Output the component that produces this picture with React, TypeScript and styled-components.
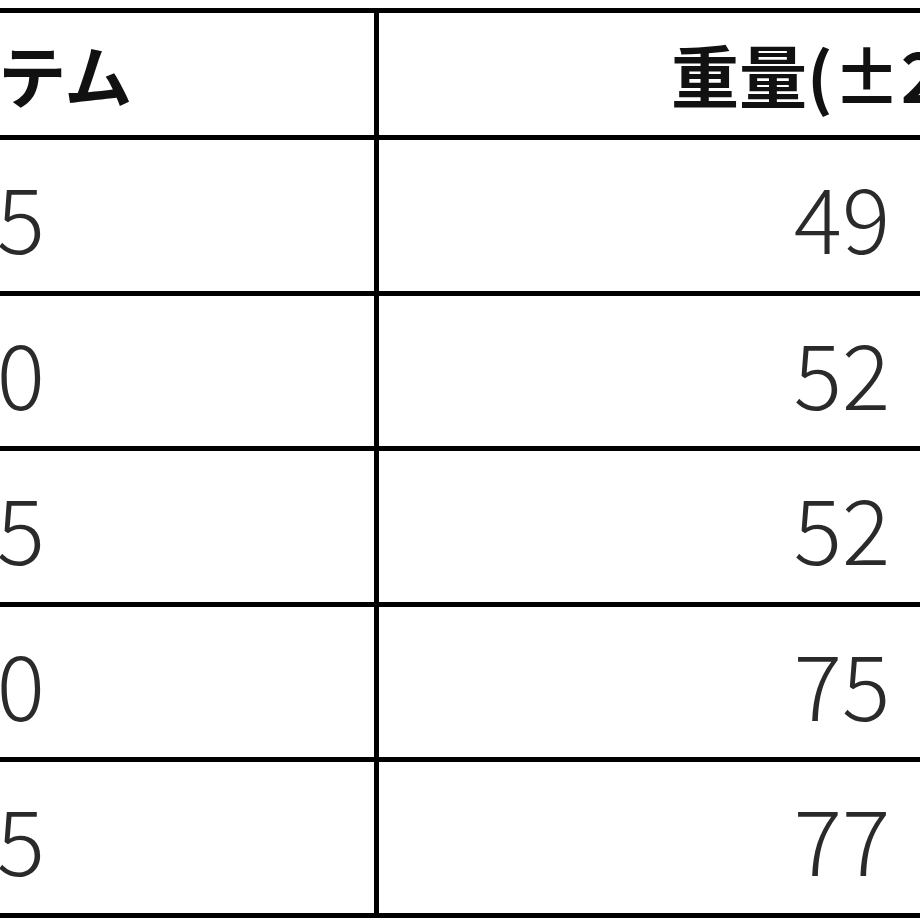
import React from "react";
import styled, { createGlobalStyle } from "styled-components";

const Global = createGlobalStyle`
  html, body { margin: 0; padding: 0; background: #fff; }
  body { font-family: "Noto Sans CJK JP", "Noto Sans", sans-serif; }
`;

const Viewport = styled.div`
  width: 920px;
  height: 920px;
  overflow: hidden;
  background: #fff;
`;

const Table = styled.table`
  width: 1474.5px;
  min-width: 1474.5px;
  margin-top: 8px;
  margin-left: -170px;
  border-spacing: 0;
  border-collapse: separate;
  border-top: 5px solid #000;
  border-left: 5px solid #000;
  table-layout: fixed;
`;

const Col = styled.col<{ $width: number }>`
  width: ${(p) => p.$width}px;
`;

const HeadCell = styled.th<{ $align: "left" | "center" }>`
  box-sizing: border-box;
  height: 127px;
  padding: 0 0 0 ${(p) => (p.$align === "left" ? 32 : 0)}px;
  border-right: 5px solid #000;
  border-bottom: 5px solid #000;
  text-align: ${(p) => p.$align};
  vertical-align: middle;
  font-family: "Noto Sans CJK JP", sans-serif;
  font-weight: 700;
  font-size: 68px;
  line-height: 1;
  color: #111;
  white-space: nowrap;
`;

const Cell = styled.td<{ $align: "left" | "center" }>`
  box-sizing: border-box;
  height: 155.5px;
  padding: 0 0 0 ${(p) => (p.$align === "left" ? 43 : 6)}px;
  border-right: 5px solid #000;
  border-bottom: 5px solid #000;
  text-align: ${(p) => p.$align};
  vertical-align: middle;
  font-family: "Noto Sans CJK JP", sans-serif;
  font-weight: 300;
  font-size: 90px;
  line-height: 1;
  color: #2a2a2a;
  white-space: nowrap;
`;

const rows = [
  ["12.5", "49"],
  ["15.0", "52"],
  ["17.5", "52"],
  ["20.0", "75"],
  ["22.5", "77"],
];

export default function App() {
  return (
    <Viewport>
      <Global />
      <Table>
        <colgroup>
          <Col $width={543.5} />
          <Col $width={926} />
        </colgroup>
        <thead>
          <tr>
            <HeadCell $align="left">アイテム</HeadCell>
            <HeadCell $align="center">重量(±2g)</HeadCell>
          </tr>
        </thead>
        <tbody>
          {rows.map((r, i) => (
            <tr key={i}>
              <Cell $align="left">{r[0]}</Cell>
              <Cell $align="center">{r[1]}</Cell>
            </tr>
          ))}
        </tbody>
      </Table>
    </Viewport>
  );
}
